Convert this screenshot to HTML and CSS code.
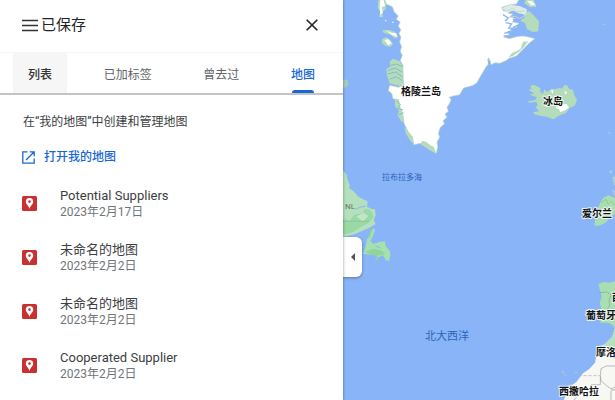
FILE: index.html
```html
<!DOCTYPE html>
<html lang="zh-CN">
<head>
<meta charset="utf-8">
<title>已保存</title>
<link rel="stylesheet" href="styles.css">
</head>
<body>
<div class="app">
  <main class="panel">
    <header class="header">
      <button class="icon-button" type="button" aria-label="菜单">
        <svg width="16" height="16" viewBox="0 0 16 16"><path d="M0 3.500h16M0 8.500h16M0 13.500h16" stroke="#333" stroke-width="1.500"/></svg>
      </button>
      <h1 class="title">已保存</h1>
      <button class="icon-button close" type="button" aria-label="关闭">
        <svg width="12" height="12" viewBox="0 0 12 12"><path d="M.7.7l10.6 10.6M11.3.7L.7 11.3" stroke="#222" stroke-width="1.6"/></svg>
      </button>
    </header>
    <nav class="tabs" role="tablist">
      <button class="tab hovered" type="button" role="tab">列表</button>
      <button class="tab" type="button" role="tab">已加标签</button>
      <button class="tab" type="button" role="tab">曾去过</button>
      <button class="tab selected" type="button" role="tab" aria-selected="true">地图</button>
    </nav>
    <section class="content">
      <p class="intro">在“我的地图”中创建和管理地图</p>
      <a class="open-link" href="#">
        <svg width="13" height="13" viewBox="0 0 13 13" fill="none" stroke="#1967d2" stroke-width="1.3"><path d="M5.500.8H.8v11.4h11.4V7.500M7.700.8h4.500v4.500M12 1L4 9"/></svg>
        打开我的地图
      </a>
      <ul class="maps">
        <li class="map-item">
          <svg class="pin" viewBox="0 0 15 15"><rect width="15" height="15" rx="1.5" fill="#cb3030"/><path fill="#fff" fill-rule="evenodd" d="M7.5 2a3.7 3.7 0 0 0-3.7 3.7C3.8 8.4 6.8 9.5 7.5 13c.7-3.5 3.7-4.6 3.7-7.3A3.7 3.7 0 0 0 7.5 2zm0 2.3a1.3 1.3 0 1 1 0 2.6 1.3 1.3 0 0 1 0-2.6z"/></svg>
          <div><h2 class="name">Potential Suppliers</h2><p class="date">2023年2月17日</p></div>
        </li>
        <li class="map-item">
          <svg class="pin" viewBox="0 0 15 15"><rect width="15" height="15" rx="1.5" fill="#cb3030"/><path fill="#fff" fill-rule="evenodd" d="M7.5 2a3.7 3.7 0 0 0-3.7 3.7C3.8 8.4 6.8 9.5 7.5 13c.7-3.5 3.7-4.6 3.7-7.3A3.7 3.7 0 0 0 7.5 2zm0 2.3a1.3 1.3 0 1 1 0 2.6 1.3 1.3 0 0 1 0-2.6z"/></svg>
          <div><h2 class="name">未命名的地图</h2><p class="date">2023年2月2日</p></div>
        </li>
        <li class="map-item">
          <svg class="pin" viewBox="0 0 15 15"><rect width="15" height="15" rx="1.5" fill="#cb3030"/><path fill="#fff" fill-rule="evenodd" d="M7.5 2a3.7 3.7 0 0 0-3.7 3.7C3.8 8.4 6.8 9.5 7.5 13c.7-3.5 3.7-4.6 3.7-7.3A3.7 3.7 0 0 0 7.5 2zm0 2.3a1.3 1.3 0 1 1 0 2.6 1.3 1.3 0 0 1 0-2.6z"/></svg>
          <div><h2 class="name">未命名的地图</h2><p class="date">2023年2月2日</p></div>
        </li>
        <li class="map-item">
          <svg class="pin" viewBox="0 0 15 15"><rect width="15" height="15" rx="1.5" fill="#cb3030"/><path fill="#fff" fill-rule="evenodd" d="M7.5 2a3.7 3.7 0 0 0-3.7 3.7C3.8 8.4 6.8 9.5 7.5 13c.7-3.5 3.7-4.6 3.7-7.3A3.7 3.7 0 0 0 7.5 2zm0 2.3a1.3 1.3 0 1 1 0 2.6 1.3 1.3 0 0 1 0-2.6z"/></svg>
          <div><h2 class="name">Cooperated Supplier</h2><p class="date">2023年2月2日</p></div>
        </li>
      </ul>
    </section>
  </main>
  <aside class="map">
    <svg class="world" viewBox="343 0 272 400" preserveAspectRatio="xMinYMin slice">
      <g transform="translate(343 0) scale(.33333)">
        <!-- Greenland -->
        <path fill="#fff" stroke="#bedbc9" stroke-width="2" d="M124 -5L130 12 148 20 154 36 166 48 160 58 172 66 166 78 174 90 168 100 174 112 170 126 176 140 172 154 178 166 172 182 180 196 180 240 184 256 166 262 140 256 136 272 146 280 150 296 164 300 170 324 178 346 184 372 196 396 208 412 212 434 232 430 250 440 262 450 280 460 284 440 282 426 290 412 286 400 292 382 304 372 300 362 312 352 306 342 316 334 312 322 320 310 324 298 318 292 330 288 350 284 362 264 376 260 390 256 402 248 408 236 420 216 428 202 436 192 434 178 442 182 444 194 456 188 470 190 488 182 500 174 520 168 534 154 546 142 558 130 575 116 560 112 540 108 520 110 500 116 482 112 500 104 490 98 508 92 496 84 520 82 528 70 508 66 516 56 500 50 510 42 496 40 504 28 482 34 476 22 500 14 520 12 530 -5z"/>
        <path fill="#b5dcba" d="M150 176L170 184 180 200 182 254 170 258 140 250 132 226 130 206 142 200 140 186zM156 296L168 298 172 320 180 340 184 362 176 366 164 346 168 334 156 318zM184 380L196 396 210 412 212 432 200 420 188 400zM232 432L238 422 250 426 262 436 272 440 280 460 256 448zM106 0L124 0 130 14 128 28 118 36 120 52 108 50 112 36 104 24zM118 90L140 90 156 96 166 110 158 116 142 104 122 98zM118 116L130 112 142 120 150 132 142 140 128 138 116 128zM540 36L560 34 576 50 588 64 586 94 570 96 552 88 546 68 530 62 546 52zM540 126L556 124 544 140 530 154 510 168 496 172 508 158 532 148zM548 0L572 0 580 20 562 22 544 10z"/>
        <path fill="#fff" d="M112 0L122 0 126 18 116 22 120 38 112 44 110 24zM130 92L146 98 160 100 162 110 148 106zM124 120L136 118 146 130 136 136zM552 2L568 4 578 16 564 16z"/>
        <path fill="none" stroke="#88b9cf" stroke-width="3" d="M142 196L160 192 178 200M134 212L156 204 178 216M134 222L158 216 180 232M140 238L160 230 178 242M160 302L172 314 164 326 180 330M168 344L182 338"/>
        <path fill="#dcebe5" d="M476 24L500 14 530 18 552 28 548 44 526 40 510 32 492 38z"/>
        <path fill="none" stroke="#8ab4f8" stroke-width="4" d="M480 44L496 54 486 64M488 68L506 72 496 86M510 58L524 64 536 58M484 100L506 92 528 96M482 108L502 108M528 74L510 82M354 282L362 268 374 274 370 262"/>
        <path fill="none" stroke="#c9d5d2" stroke-width="3" d="M476 26L492 34 508 24 522 36 544 32M500 52L516 48 530 56 546 46"/>
        <path fill="#8ab4f8" d="M128 60h10v4h-10zM148 66h7v5h-7zM436 173h3v19h-3z"/>
        <path fill="#fff" d="M126 61h4v3h-4zM147 65h5v3h-5z"/>
        <!-- Iceland -->
        <path fill="#b5dcba" d="M556 270L566 266 562 258 572 254 584 260 592 264 592 276 600 282 604 268 612 276 626 266 636 268 648 264 658 266 664 254 674 258 678 266 690 270 694 286 702 300 696 316 680 324 668 340 650 346 632 358 610 350 594 348 572 342 572 336 588 334 578 322 584 316 580 306 556 308 556 304 576 300 582 292 560 284 574 280z"/>
        <path fill="#fff" d="M624 270l8 2-4 10zM664 274l8 2-4 8zM636 322L654 314 670 312 678 322 668 330 652 336 648 328zM602 310L624 306 620 318 606 318z"/>
        <!-- Newfoundland and Labrador -->
        <path fill="#b5e0bc" d="M0 512L10 522 14 540 20 556 18 564 32 574 46 590 60 598 74 604 72 620 84 626 96 628 98 646 92 660 98 672 78 684 50 696 30 704 0 710z"/>
        <path fill="#98d9a6" d="M0 656L20 662 34 644 58 640 66 626 82 630 92 650 78 668 54 680 40 690 22 700 0 704z"/>
        <path fill="#c4e4c5" d="M40 650L62 638 76 648 60 664z"/>
        <path fill="#a6dfb0" d="M60 762L68 740 72 718 84 698 92 684 96 690 90 708 82 724 92 732 108 726 126 724 128 738 140 752 142 764 138 784 128 780 120 766 106 772 92 764z"/>
        <path fill="#8ed49b" d="M66 756L90 746 116 752 126 762 98 768zM96 776l8-4 4 4-10 6zM82 690l8-6-10 30-4 4z"/>
        <path fill="none" stroke="#8ab4f8" stroke-width="3" d="M38 628L50 622 68 618M98 738L112 744"/>
        <path fill="none" stroke="#8da99b" stroke-width="2" stroke-dasharray="4 2" d="M0 664H78"/>
        <path fill="#a9cbbb" d="M0 238L14 240 16 254 8 264 0 260z"/>
        <!-- Ireland and Great Britain -->
        <path fill="#a9deb1" d="M754 674L758 652 752 636 764 624 772 608 780 594 796 586 816 594V640L802 652 788 668 772 676 758 678z"/>
        <path fill="none" stroke="#75a886" stroke-width="2" stroke-dasharray="4 2" d="M776 608L788 598 796 612 806 604 814 616"/>
        <path fill="#a9cfd0" d="M798 514l8-4 2 6-6 6zM808 530h8v26h-4zM806 568l10 6v16z"/>
        <!-- Iberia -->
        <path fill="#a9deb1" d="M766 852L782 846 800 848 816 844V984L808 974 794 968 774 968 766 956 776 930 770 908 776 890z"/>
        <path fill="none" stroke="#71998a" stroke-width="2" stroke-dasharray="6 2" d="M770 878L790 876 804 884 798 902 800 916 790 932"/>
        <!-- North Africa -->
        <path fill="#f7f7f4" d="M816 984L808 1010 786 1032 762 1044 760 1068 756 1088 738 1108 720 1120 700 1146 684 1158 672 1180 662 1200H816z"/>
        <path fill="#b5e0bc" d="M816 982L808 1010 786 1032 772 1042 816 1042z"/>
        <path fill="none" stroke="#9a9c9e" stroke-width="2" d="M772 1126L774 1106 790 1098 816 1098M772 1126L774 1142 792 1158 804 1166 816 1162M772 1130V1154H744M804 1172V1200M816 1170H804M694 1200L704 1186"/>
        <path fill="none" stroke="#aaacae" stroke-width="2" stroke-dasharray="10 5" d="M706 1127H772"/>
        <path fill="#a6c9d0" d="M656 1112l6 2 2 8-6-2zM664 1124h6v3h-6zM694 1116h8v3h-8zM794 396h8v4h-8zM780 72h8v3h-8z"/>
      </g>
      <g class="country">
        <text x="401" y="95">格陵兰岛</text>
        <text x="543" y="105">冰岛</text>
        <text x="582" y="217">爱尔兰</text>
        <text x="612" y="301">西班牙</text>
        <text x="586" y="319">葡萄牙</text>
        <text x="596" y="356">摩洛哥</text>
        <text x="559" y="395">西撒哈拉</text>
      </g>
      <text class="region" x="345" y="209">NL</text>
      <text class="sea" x="382" y="180">拉布拉多海</text>
      <text class="ocean" x="425" y="340">北大西洋</text>
    </svg>
    <button class="collapse" type="button" aria-label="收起侧边栏">
      <svg width="4" height="8" viewBox="0 0 4 8"><path d="M4 0v8L0 4z" fill="#555"/></svg>
    </button>
  </aside>
</div>
</body>
</html>
```
FILE: styles.css
```css
* { box-sizing: border-box; }

body {
  margin: 0;
  font-family: Roboto, "Noto Sans CJK SC", sans-serif;
  color: #3c4043;
  background: #fff;
}

h1, h2, p, ul { margin: 0; padding: 0; font-weight: 400; }

button { font: inherit; border: 0; background: none; padding: 0; color: inherit; cursor: pointer; }

svg { display: block; }

.app {
  display: grid;
  grid-template-columns: 343fr 272fr;
  min-height: 100vh;
}

.panel {
  position: relative;
  z-index: 1;
  background: #fff;
  box-shadow: 0 0 3px rgba(0, 0, 0, .4);
}

.header {
  display: flex;
  align-items: center;
  gap: 3px;
  height: 53px;
  padding: 0 25px 3px 22px;
  border-bottom: 1px solid #f6f6f6;
}

.title { flex: 1; font-size: 15px; line-height: 20px; color: #222; }

.tabs {
  display: flex;
  justify-content: space-between;
  height: 42px;
  padding: 0 13px;
  border-bottom: 2px solid #c4c4c4;
}

.tab {
  position: relative;
  padding: 3px 15px 0;
  font-size: 12px;
  line-height: 16px;
  color: #5f6368;
}

.hovered { background: #f6f6f6; color: #333; font-weight: 500; }

.selected { color: #1967d2; font-weight: 500; }

.selected::after {
  content: "";
  position: absolute;
  inset: auto 16px 0;
  height: 3px;
  border-radius: 3px 3px 0 0;
  background: #1967d2;
}

.content { padding: 18px 22px 0; }

.intro { font-size: 12px; line-height: 18px; padding-left: 1px; }

.open-link {
  display: flex;
  align-items: center;
  gap: 9px;
  margin-top: 17px;
  font-size: 12px;
  line-height: 18px;
  font-weight: 500;
  color: #1967d2;
  text-decoration: none;
}

.maps { list-style: none; margin-top: 10px; }

.map-item {
  display: flex;
  align-items: center;
  gap: 23px;
  height: 54px;
}

.pin { width: 15px; height: 15px; }

.name { font-size: 13px; line-height: 18px; }

.date { font-size: 12px; line-height: 15px; color: #70757a; }

.map {
  position: relative;
  overflow: hidden;
  background: #8ab4f8;
}

.world { position: absolute; width: 100%; height: 100%; }

.country text {
  font-size: 10px;
  font-weight: 700;
  fill: #111;
  stroke: rgba(255, 255, 255, .8);
  stroke-width: 2px;
  paint-order: stroke;
}

.region { font-size: 8px; fill: #68746e; }

.sea { font-size: 8px; fill: #2a63b8; }

.ocean { font-size: 11px; fill: #2a63b8; }

.collapse {
  position: absolute;
  left: 0;
  top: 237px;
  display: grid;
  place-items: center;
  width: 19px;
  height: 40px;
  border-radius: 0 6px 6px 0;
  background: #fff;
  box-shadow: 0 1px 3px rgba(0, 0, 0, .35);
}
```
